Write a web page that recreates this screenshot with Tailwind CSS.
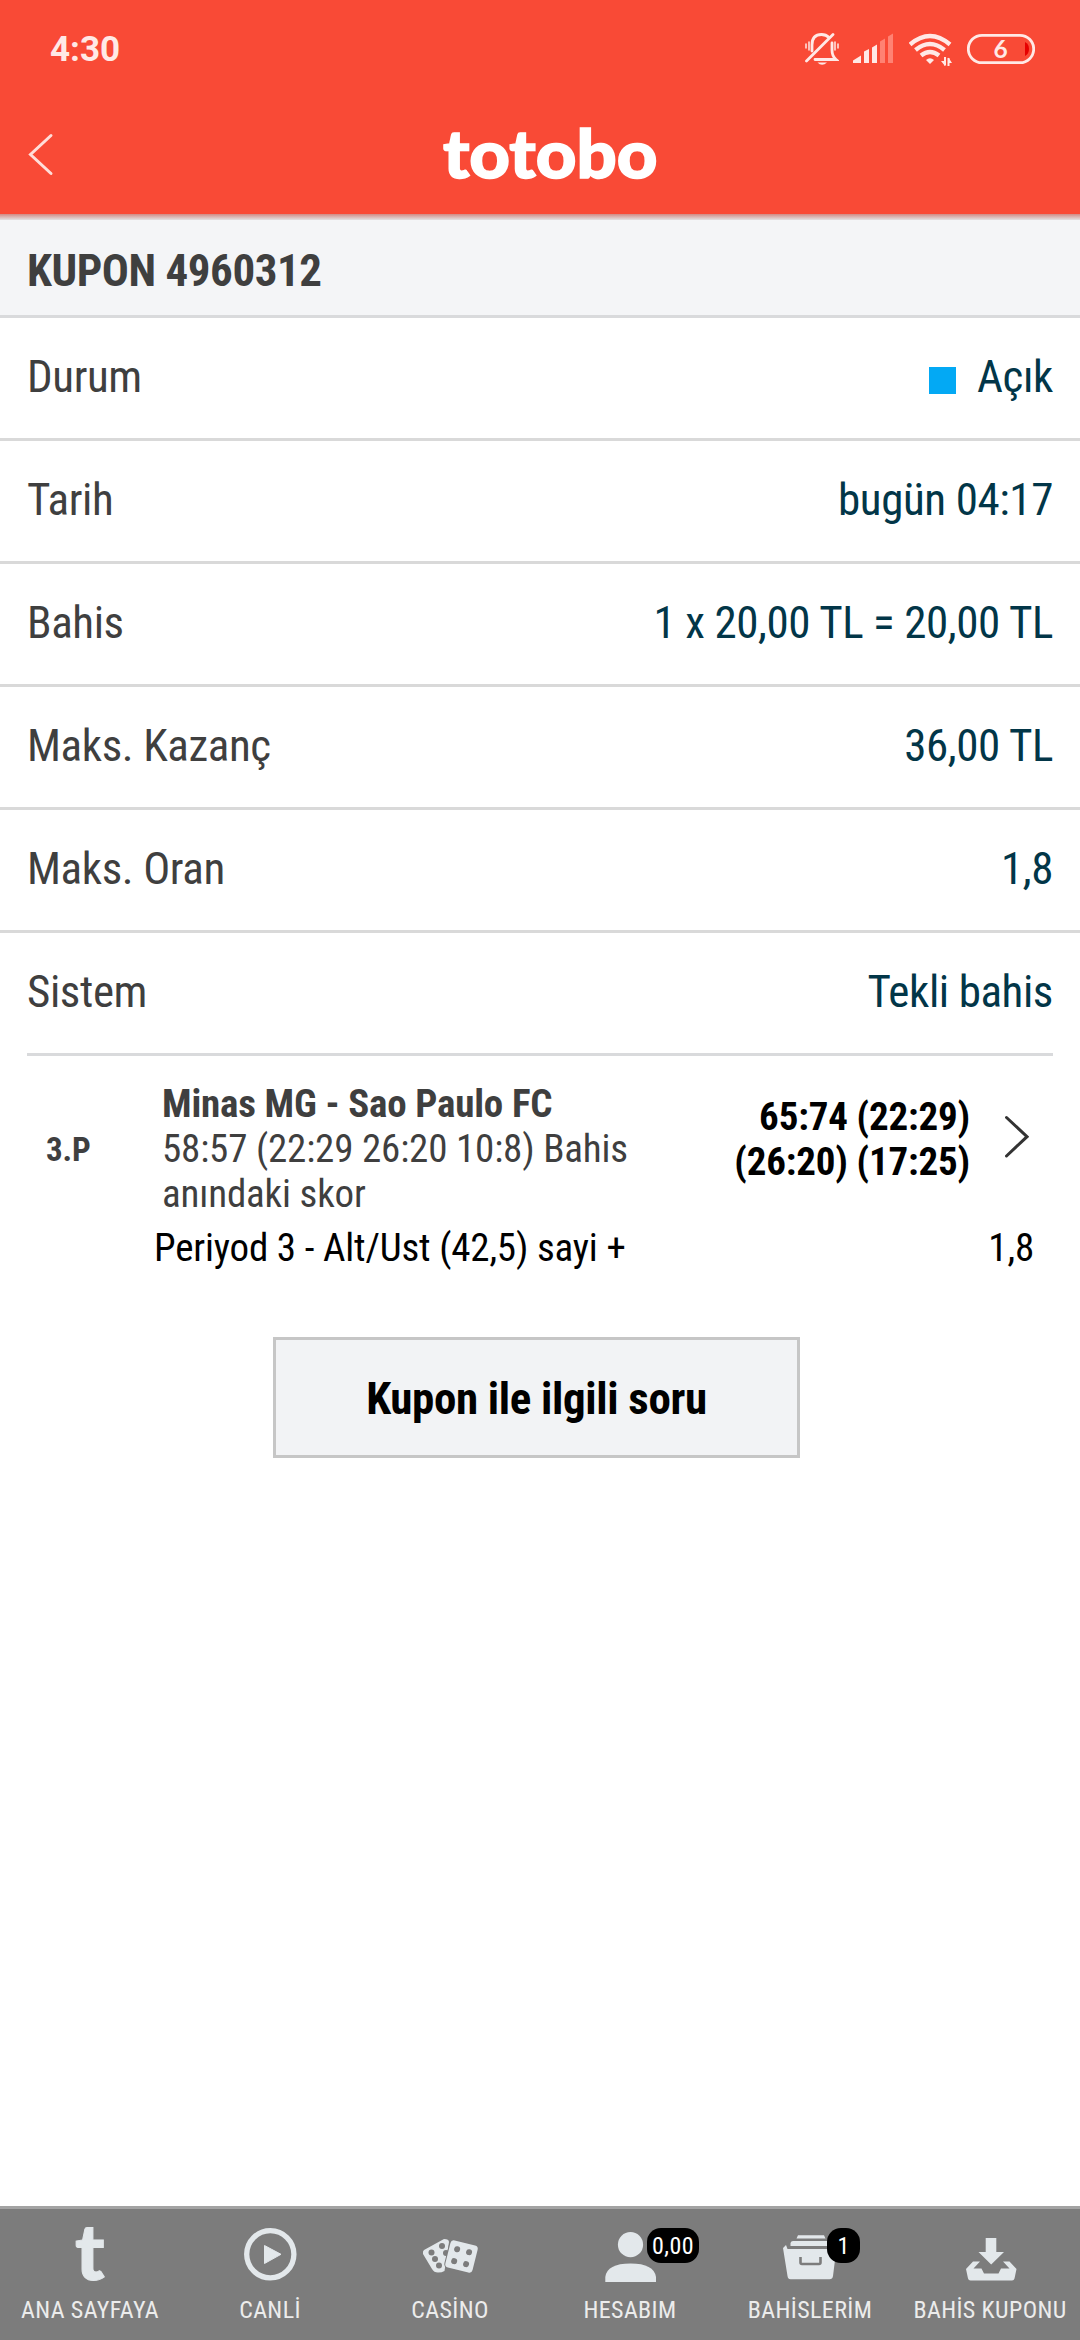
<!DOCTYPE html>
<html lang="tr">
<head>
<meta charset="utf-8">
<title>Kupon 4960312</title>
<script src="https://cdn.jsdelivr.net/npm/@tailwindcss/browser@4"></script>
</head>
<body class="flex h-[2340px] w-[1080px] flex-col overflow-hidden bg-white font-['Roboto','Noto_Sans',sans-serif] font-stretch-condensed">

<header class="h-[214px] shrink-0 bg-[#f94a36]">
  <div class="flex h-24 items-center pt-0.5 pr-[45px] pl-[50px]">
    <span class="mr-auto text-[35px] leading-none font-bold text-[#ffe9e6] font-stretch-normal">4:30</span>
    <!-- muted bell -->
    <svg class="mr-[14px] h-9 w-[34px]" viewBox="805 30 34 36" fill="none" stroke="#ffe9e6" stroke-width="2.8" stroke-linecap="round">
      <path d="M812 50V44Q812 33.500 821.500 33.500Q826 33.500 829 36.500M832 42V49Q832 55 836 58.500H815"/>
      <path d="M806.500 60L833 33.500"/>
      <path d="M806 43V47M809 41V49M835 41V49M838 43V47" stroke-width="1.500"/>
      <path d="M817.500 61.500H827Q822 66 817.500 61.500Z" fill="#ffe9e6" stroke="none"/>
    </svg>
    <!-- signal -->
    <svg class="mr-[15px] h-9 w-[41px]" viewBox="853 30 41 36" fill="#ffe9e6">
      <path d="M853 62V59.500L861 54.500V62ZM864 62V50.500L869 48V62ZM872 62V46.500L877 43.500V62Z"/>
      <path d="M880 62V40.500L885 37.500V62ZM888 62V35.500L893 32.500V62Z" fill="#ff8273"/>
    </svg>
    <!-- wifi with traffic arrows -->
    <svg class="mr-[15px] h-9 w-[43px]" viewBox="909 30 43 36" fill="none" stroke="#ffe9e6" stroke-width="4.4">
      <path d="M910 43.500Q930 26.500 950 43.500"/>
      <path d="M915.500 49Q930 37 944.500 49"/>
      <path d="M921 54.500Q930 47.500 939 54.500"/>
      <path d="M926 59Q930 55.500 934 59L930 63Z" fill="#ffe9e6" stroke="none"/>
      <path d="M945 56V64.500M948.500 57V65" stroke-width="2"/>
      <path d="M941 60H945V65ZM948.500 62H952L948.500 56.500Z" fill="#ffe9e6" stroke="none"/>
    </svg>
    <!-- battery -->
    <svg class="h-9 w-[68px]" viewBox="967 30 68 36">
      <rect x="968.300" y="34.300" width="65.400" height="27.400" rx="13.700" fill="none" stroke="#ffe9e6" stroke-width="2.800"/>
      <path d="M1025 41Q1029 43 1029 48T1025 55Z" fill="#e60000"/>
      <text x="1000.500" y="57" text-anchor="middle" font-family="Lato" font-weight="700" font-size="24.500" fill="#ffe9e6">6</text>
    </svg>
  </div>
  <div class="flex h-[118px] items-start pt-[36px] pl-7">
    <svg class="h-[44px] w-[26px]" viewBox="28 132 26 44" fill="none" stroke="#ffded9" stroke-width="3" stroke-linecap="round"><path d="M51 135.500L30.500 154.500L51 173.500"/></svg>
    <svg class="ml-[380px] h-[58px] w-[230px] overflow-visible" viewBox="434 132 230 58">
      <text x="443" y="178" textLength="214.500" lengthAdjust="spacingAndGlyphs" font-family="Lato" font-weight="900" font-size="66" fill="#fff" stroke="#fff" stroke-width="1.500">totobo</text>
    </svg>
  </div>
</header>

<div class="h-1.5 shrink-0 bg-linear-to-b from-[#d08a85] to-[#e3e3e5]"></div>

<h1 class="h-[98px] shrink-0 border-b-3 border-[#d9dadc] bg-[#f4f5f7] pt-[6px] pl-[27px] text-[45px] leading-[89px] font-bold tracking-[-0.45px] text-[#3f3f3f]">KUPON 4960312</h1>

<dl class="shrink-0 text-[45px] leading-[118px] tracking-[-0.4px] text-[#023648]">
  <div class="flex h-[123px] justify-between border-b-3 border-[#d9d9d9] px-[27px]"><dt class="text-[#3f3f3f]">Durum</dt><dd class="flex h-[118px] items-center gap-[21px]"><span class="mt-[7px] size-[27px] bg-[#03a9f4]"></span><span>Açık</span></dd></div>
  <div class="flex h-[123px] justify-between border-b-3 border-[#d9d9d9] px-[27px]"><dt class="text-[#3f3f3f]">Tarih</dt><dd>bugün 04:17</dd></div>
  <div class="flex h-[123px] justify-between border-b-3 border-[#d9d9d9] px-[27px]"><dt class="text-[#3f3f3f]">Bahis</dt><dd>1 x 20,00 TL = 20,00 TL</dd></div>
  <div class="flex h-[123px] justify-between border-b-3 border-[#d9d9d9] px-[27px]"><dt class="text-[#3f3f3f]">Maks. Kazanç</dt><dd>36,00 TL</dd></div>
  <div class="flex h-[123px] justify-between border-b-3 border-[#d9d9d9] px-[27px]"><dt class="text-[#3f3f3f]">Maks. Oran</dt><dd>1,8</dd></div>
  <div class="mx-[27px] flex h-[123px] justify-between border-b-3 border-[#d9dadc]"><dt class="text-[#3f3f3f]">Sistem</dt><dd>Tekli bahis</dd></div>
</dl>

<main class="flex grow flex-col pt-[26px] text-[39px] leading-[45px] tracking-[-0.18px] text-black">
  <section class="flex h-[144px] pr-[51px] pl-[46px] text-[#3f3f3f]">
    <div class="w-[116px] pt-[45px] text-[33px] font-bold">3.P</div>
    <div class="w-[480px]"><p class="font-bold">Minas MG - Sao Paulo FC</p><p>58:57 (22:29 26:20 10:8) Bahis<br>anındaki skor</p></div>
    <div class="ml-auto pt-[13px] text-right font-bold text-black">65:74 (22:29)<br>(26:20) (17:25)</div>
    <svg class="mt-[33px] ml-[34px] h-[44px] w-[25px] shrink-0" viewBox="1004 1115 25 44" fill="none" stroke="#333" stroke-width="3" stroke-linecap="round"><path d="M1006.500 1117.500L1027 1136.700L1006.500 1156"/></svg>
  </section>
  <div class="flex justify-between pr-[46px] pl-[154px]"><span>Periyod 3 - Alt/Ust (42,5) sayi +</span><span>1,8</span></div>
  <button class="mt-[66px] ml-[273px] h-[121px] w-[527px] border-3 border-[#c6c6c6] bg-[#f2f3f5] pt-0.5 text-[45px] leading-[113px] font-bold tracking-[-0.35px]">Kupon ile ilgili soru</button>
</main>

<nav class="grid h-[134px] shrink-0 grid-cols-6 border-t-3 border-[#a3a3a3] bg-[#7c7c7c] text-[24px] leading-7 tracking-[0.4px] text-[#ececec]">
  <a class="flex flex-col items-center pt-[17px]">
    <svg class="mb-[14px] h-[56px] w-[60px] shrink-0 overflow-visible" viewBox="60 2226 60 56"><text x="75" y="2280" textLength="30" lengthAdjust="spacingAndGlyphs" font-family="Lato" font-weight="900" font-size="79" fill="#e3e8eb" stroke="#e3e8eb">t</text></svg>
    <span class="whitespace-nowrap">ANA SAYFAYA</span>
  </a>
  <a class="flex flex-col items-center pt-[17px]">
    <svg class="mb-[14px] h-[56px] w-[60px] shrink-0" viewBox="240 2226 60 56"><circle cx="270.300" cy="2254.300" r="23.600" fill="none" stroke="#e3e8eb" stroke-width="5.300"/><path d="M264.500 2245.500L281 2254.300L264.500 2263.500Z" fill="#e3e8eb" stroke="#e3e8eb" stroke-linejoin="round"/></svg>
    <span class="whitespace-nowrap">CANLİ</span>
  </a>
  <a class="flex flex-col items-center pt-[17px]">
    <svg class="mb-[14px] h-[56px] w-[60px] shrink-0" viewBox="420 2226 60 56">
      <path d="M424 2250L444 2239Q449 2239 449 2242L444.500 2271Q442 2272.500 438 2272.500Q434 2272.500 432 2269L423 2254Q422.500 2251 424 2250Z" fill="#e3e8eb"/>
      <g fill="#7c7c7c"><circle cx="431.500" cy="2252.500" r="3"/><circle cx="435" cy="2259" r="3"/><circle cx="439" cy="2265.500" r="3"/><circle cx="442" cy="2246" r="3"/><circle cx="446" cy="2253" r="3"/></g>
      <g transform="rotate(14 461.500 2256.500)"><rect x="447.500" y="2242.500" width="28" height="28" rx="3.500" fill="#e3e8eb" stroke="#7c7c7c" stroke-width="2" paint-order="stroke"/><g fill="#7c7c7c"><circle cx="455.500" cy="2250.500" r="3"/><circle cx="467.800" cy="2250.500" r="3"/><circle cx="455.500" cy="2262.800" r="3"/><circle cx="467.800" cy="2262.800" r="3"/></g></g>
    </svg>
    <span class="whitespace-nowrap">CASİNO</span>
  </a>
  <a class="relative flex flex-col items-center pt-[17px]">
    <svg class="mb-[14px] h-[56px] w-[60px] shrink-0" viewBox="600 2226 60 56" fill="#e3e8eb"><circle cx="630.500" cy="2244.700" r="12.600"/><path d="M605.300 2282V2277Q607 2263.500 630.500 2263.500T656 2277V2282Z"/></svg>
    <span class="absolute top-[19px] left-[107px] flex h-[35px] w-[52px] items-center justify-center rounded-[14px] bg-black text-white">0,00</span>
    <span class="whitespace-nowrap">HESABIM</span>
  </a>
  <a class="relative flex flex-col items-center pt-[17px]">
    <svg class="mb-[14px] h-[56px] w-[60px] shrink-0" viewBox="780 2226 60 56" fill="#e3e8eb">
      <path d="M796.500 2238.500L798 2235.300H824L825.500 2238.500ZM790.500 2246V2243Q791 2241 793 2241H829L831 2246ZM787.500 2249H834Q836.500 2249 836 2252L833 2276Q832.500 2279.300 829.500 2279.300H790.500Q788 2279.300 787.500 2276L783 2248L786 2245Z"/>
      <path d="M800.500 2257V2262.500Q800.500 2264 802 2264H819Q820.500 2264 820.500 2262.500V2257" fill="none" stroke="#7c7c7c" stroke-width="2.600"/>
    </svg>
    <span class="absolute top-[19px] left-[107px] flex h-[35px] w-[33px] items-center justify-center rounded-[14px] bg-black text-white">1</span>
    <span class="whitespace-nowrap">BAHİSLERİM</span>
  </a>
  <a class="flex flex-col items-center pt-[17px]">
    <svg class="mb-[14px] h-[56px] w-[60px] shrink-0" viewBox="960 2226 60 56" fill="#e3e8eb">
      <path d="M985.700 2238H996.300V2252H1004L991.200 2264.500L978.500 2252H985.700Z"/>
      <path d="M973 2261.500H980L973.500 2268.500H981.500L984 2273.500H998.500L1001 2268.500H1009.500L1003 2261.500H1009.500L1016.500 2269L1014.500 2278.500Q1014 2280.500 1012 2280.500H970.500Q968.500 2280.500 968 2278.500L966 2269Z"/>
    </svg>
    <span class="whitespace-nowrap">BAHİS KUPONU</span>
  </a>
</nav>
</body>
</html>
